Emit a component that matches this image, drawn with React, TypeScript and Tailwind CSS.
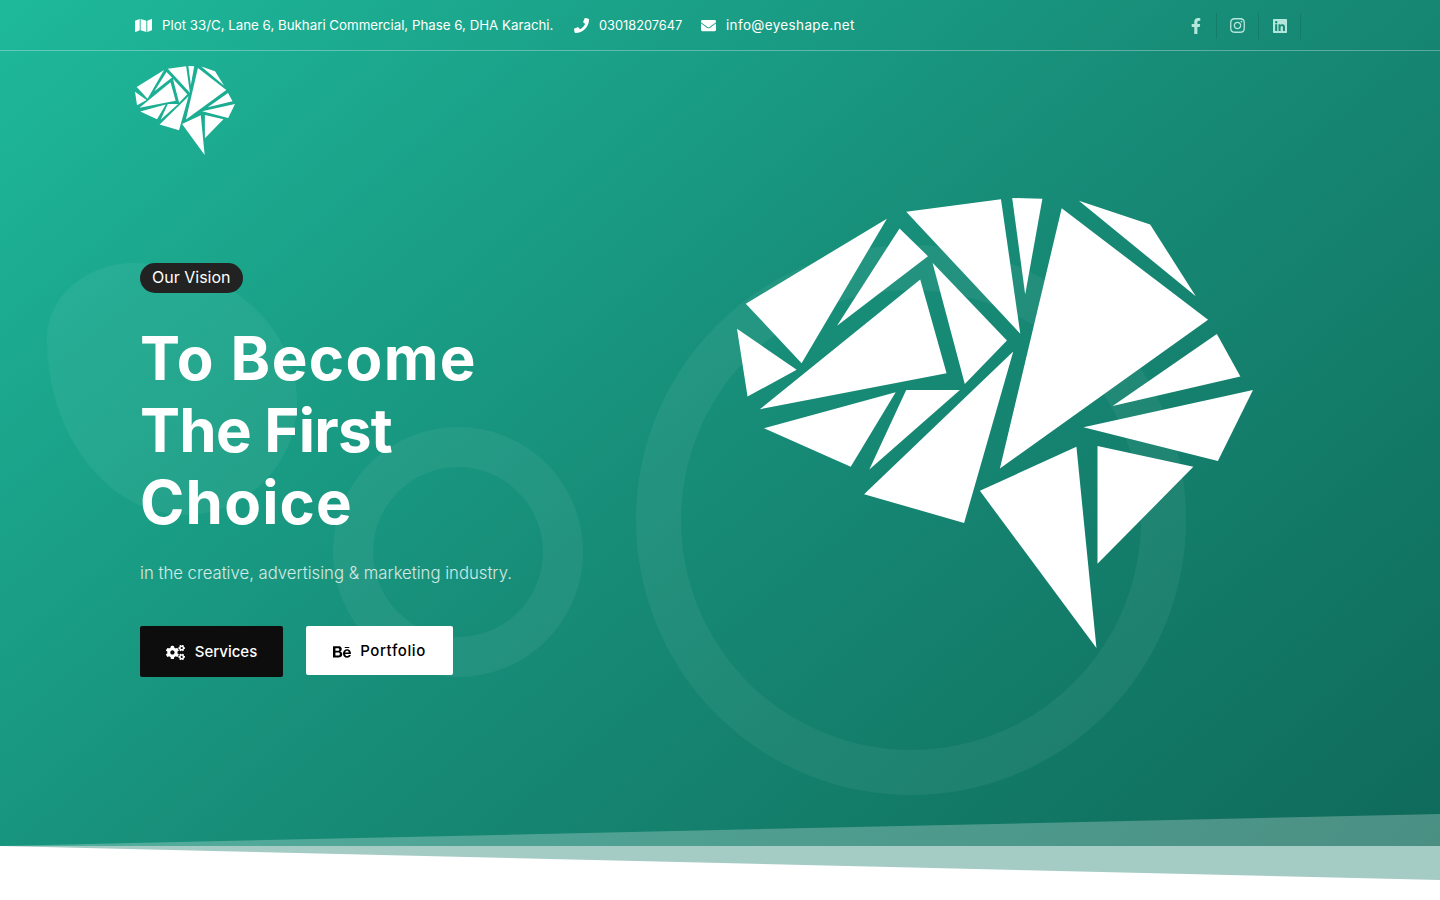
import { FaMap, FaPhone, FaEnvelope, FaFacebookF, FaInstagram, FaLinkedin, FaCogs, FaBehance } from 'react-icons/fa'

const brainShards = [
  '73,372 475,118 232,550',
  '511,147 592,230 333,438',
  '570,300 645,580 113,688',
  '605,250 817,482 697,612',
  '530,97 800,60 855,462',
  '832,56 918,58 869,345',
  '973,87 1390,420 797,865',
  '1022,64 1225,135 1355,350',
  '48,447 218,570 78,650',
  '125,745 500,637 372,860',
  '530,630 683,630 425,868',
  '835,515 695,1028 410,942',
  '1415,463 1482,590 1118,678',
  '1518,630 1418,843 1035,742',
  '1015,800 1072,1402 740,932',
  '1075,798 1348,860 1075,1150',
]

function Brain({ className }: { className: string }) {
  return (
    <svg viewBox="48 56 1470 1346" preserveAspectRatio="none" className={className} aria-hidden="true">
      {brainShards.map((points) => (
        <polygon key={points} points={points} fill="#fff" />
      ))}
    </svg>
  )
}

export default function App() {
  return (
    <div className="relative min-h-[900px] overflow-hidden bg-white font-['Inter',sans-serif]">
      <section className="relative h-[846px] overflow-hidden bg-[linear-gradient(140deg,#1eb99b_0%,#178d78_50%,#0f6a5a_100%)]">
        {/* decorative shapes */}
        <div className="absolute left-[47px] top-[263px] h-[252px] w-[250px] rounded-[35%_65%_45%_55%/30%_55%_45%_70%] bg-white/5" />
        <div className="absolute left-[333px] top-[427px] h-[250px] w-[250px] rounded-full border-[40px] border-white/5" />
        <div className="absolute left-[636px] top-[245px] h-[550px] w-[550px] rounded-full border-[45px] border-white/5" />

        <div className="relative border-b border-white/30">
          <div className="mx-auto flex h-[50px] w-[1170px] items-center justify-between text-white">
            <div className="flex items-center">
              <FaMap className="mr-[10px] text-[17px]" />
              <span className="mr-[20px] w-[392px] whitespace-nowrap pt-[2px] text-[13.3px]">Plot 33/C, Lane 6, Bukhari Commercial, Phase 6, DHA Karachi.</span>
              <FaPhone className="mr-[10px] text-[15px]" />
              <span className="mr-[19px] w-[83px] pt-[2px] text-[12.8px]">03018207647</span>
              <FaEnvelope className="mr-[10px] text-[15px]" />
              <span className="text-[13.5px] tracking-[0.35px]">info@eyeshape.net</span>
            </div>
            <div className="mr-[4px] flex items-center pt-[1px] text-[16px] text-[#b4e7db]">
              <a className="flex h-[26px] w-[42px] items-center justify-center border-r border-black/10"><FaFacebookF /></a>
              <a className="flex h-[26px] w-[42px] items-center justify-center border-r border-black/10"><FaInstagram className="text-[17px]" /></a>
              <a className="flex h-[26px] w-[42px] items-center justify-center border-r border-black/10"><FaLinkedin /></a>
            </div>
          </div>
        </div>

        <div className="relative mx-auto w-[1170px] pt-[15px]">
          <Brain className="h-[89px] w-[100px]" />
        </div>

        <div className="relative mx-auto flex w-[1160px] justify-between pt-[43px]">
          <div className="pt-[65px]">
            <span className="inline-block rounded-full bg-[#222] px-3 pb-[5px] pt-[3px] text-[16px] leading-[22px] text-white">Our Vision</span>
            <h1 className="mt-[29px] text-[60px] font-bold leading-[72px] text-white">
              <span className="block tracking-[1.4px]">To Become</span>
              <span className="block tracking-[-0.75px]">The First</span>
              <span className="block tracking-[1.2px]">Choice</span>
            </h1>
            <p className="mt-[22px] text-[16.7px] font-light leading-[26px] text-white/80">in the creative, advertising &amp; marketing industry.</p>
            <div className="mt-[40px] flex items-start">
              <a className="flex h-[51px] w-[143px] items-center justify-center rounded-[2px] bg-[#0d0d0d] pt-[2px] text-[15px] font-medium text-white">
                <FaCogs className="mr-[10px] text-[19px]" />
                Services
              </a>
              <a className="ml-[23px] flex h-[49px] w-[147px] items-center justify-center rounded-[2px] bg-white pt-[2px] text-[15px] font-medium tracking-[0.6px] text-black">
                <FaBehance className="mr-[9px] text-[18px]" />
                Portfolio
              </a>
            </div>
          </div>
          <Brain className="mr-[47px] h-[450px] w-[516px]" />
        </div>
      </section>

      {/* angled bands at the foot of the hero */}
      <svg viewBox="0 0 1440 66" preserveAspectRatio="none" className="absolute left-0 top-[814px] h-[66px] w-full" aria-hidden="true">
        <polygon points="0,32 1440,0 1440,32" fill="#fff" fillOpacity="0.25" />
        <polygon points="0,32 1440,32 1440,66" fill="#a5cbc5" />
      </svg>
    </div>
  )
}
